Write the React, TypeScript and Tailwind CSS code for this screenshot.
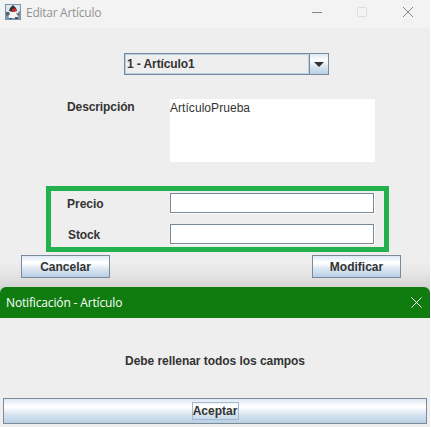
const metal = 'border border-[#7a8a99] bg-[linear-gradient(#dde8f3_0%,#ffffff_30%,#ffffff_34%,#dce7f2_60%,#b8cfe5_100%)]';

function JavaIcon() {
  return (
    <svg width="16" height="16" viewBox="0 0 16 16" className="shrink-0">
      <rect x="0.5" y="0.5" width="15" height="15" fill="#dfe7ed" stroke="#7795b0" />
      <path d="M1 10h14v5H1z" fill="#7f99ae" />
      <path d="M5 6h7l2 5-2 3H4l-1-4z" fill="#f7f7f7" />
      <path d="M8 1 5 4 4 7l4 1 4-1-1-3z" fill="#303035" />
      <path d="M1 8h3l1 2-2 2-2-1zM11 8l2 2 1-3 1 1-1 4-2-1z" fill="#59636b" />
      <path d="M4 14h3v1H4zM10 13h3v2h-3z" fill="#48545e" />
      <path d="M9 4h1v1h1v2h-1v1H8V7H7V5h2z" fill="#dc2828" />
    </svg>
  );
}

function Field() {
  return (
    <div className="h-[21px] w-[205px] border-r border-b border-white">
      <div className="h-5 w-[204px] border border-[#7a8a99] bg-white" />
    </div>
  );
}

function Button({ label, spacing }: { label: string; spacing: string }) {
  return (
    <div className={`flex h-[23px] w-[89px] items-center justify-center ${metal}`}>
      <span className={spacing}>{label}</span>
    </div>
  );
}

export default function App() {
  return (
    <div className="h-[427px] w-[431px] overflow-hidden bg-white">
      <div className="flex h-[427px] w-[430px] flex-col bg-[#eeeeee] font-['Liberation_Sans',Arial,sans-serif] text-[12px] leading-[14px] font-bold whitespace-nowrap text-[#333333]">
        <header className="flex h-7 shrink-0 items-center bg-[#f3f3f3] pl-[5px] font-['Open_Sans','Noto_Sans',sans-serif] font-normal text-[#929292]">
          <div className="flex -translate-y-0.5 items-center">
            <JavaIcon />
          </div>
          <span className="ml-[5px] -translate-y-px tracking-[-0.27px]">Editar Artículo</span>
          <svg width="102" height="12" viewBox="0 0 102 12" fill="none" className="mr-[16px] ml-auto -translate-y-0.5">
            <path d="M0 6.5h10" stroke="#858585" />
            <rect x="45.5" y="1.5" width="9" height="9" rx="1" stroke="#dddddd" />
            <path d="m91 1 10 10M101 1 91 11" stroke="#858585" />
          </svg>
        </header>

        <div className="flex h-[259px] shrink-0 flex-col bg-[linear-gradient(#eeeeee_0%,#eeeeee_90%,#e5e5e5_95%,#d5d5d5_100%)] pt-[25px]">
          <div className="ml-[124px] flex h-[22px] w-[205px] shrink-0 border border-[#7a8a99]">
            <div className="flex w-[184px] items-center border border-[#b8cfe5] pl-px">
              <span className="tracking-[-0.1px]">1 - Artículo1</span>
            </div>
            <div className="flex flex-1 items-center justify-center border-l border-[#7a8a99] bg-[linear-gradient(#dde8f3,#ffffff_30%,#dce7f2_60%,#b8cfe5)]">
              <svg width="10" height="5" viewBox="0 0 10 5">
                <path d="M0 0h10L5 5z" fill="#333333" />
              </svg>
            </div>
          </div>

          <div className="mt-6 ml-[67px] flex h-[63px] shrink-0">
            <div className="w-[103px] pt-px tracking-[-0.1px]">Descripción</div>
            <div className="w-[205px] bg-white pt-[2px] font-normal">
              <span className="tracking-[0.05px]">ArtículoPrueba</span>
            </div>
          </div>

          <div className="mt-6 ml-[46px] h-[66px] w-[343px] shrink-0 border-[5px] border-[#22b14c] pt-[2px] pl-4">
            <div className="flex h-[31px]">
              <div className="w-[103px] pt-1">Precio</div>
              <Field />
            </div>
            <div className="flex h-[21px]">
              <div className="w-[103px] pt-1 pl-px tracking-[-0.1px]">Stock</div>
              <Field />
            </div>
          </div>

          <div className="mt-[3px] flex justify-between pr-[29px] pl-[21px]">
            <Button label="Cancelar" spacing="tracking-normal" />
            <Button label="Modificar" spacing="tracking-normal" />
          </div>
        </div>

        <section className="flex flex-1 flex-col">
          <div className="h-[31px] shrink-0 bg-[#d5d5d5]">
            <div className="flex h-[31px] items-center justify-between rounded-t-[6px] bg-[#107c10] pr-[8px] pl-[6px] font-['Open_Sans','Noto_Sans',sans-serif] font-normal text-white">
              <span className="tracking-[-0.15px]">Notificación - Artículo</span>
              <svg width="11" height="11" viewBox="0 0 11 11" fill="none" stroke="#ffffff">
                <path d="m.5.5 10 10M10.5.5l-10 10" />
              </svg>
            </div>
          </div>
          <div className="flex h-20 shrink-0 justify-center pt-9">
            <span className="tracking-[-0.05px]">Debe rellenar todos los campos</span>
          </div>
          <div className={`mx-[3px] flex h-[26px] items-center justify-center ${metal}`}>
            <div className="flex h-[18px] w-[47px] items-center justify-center border border-[#a3b8cc]">Aceptar</div>
          </div>
        </section>
      </div>
    </div>
  );
}
